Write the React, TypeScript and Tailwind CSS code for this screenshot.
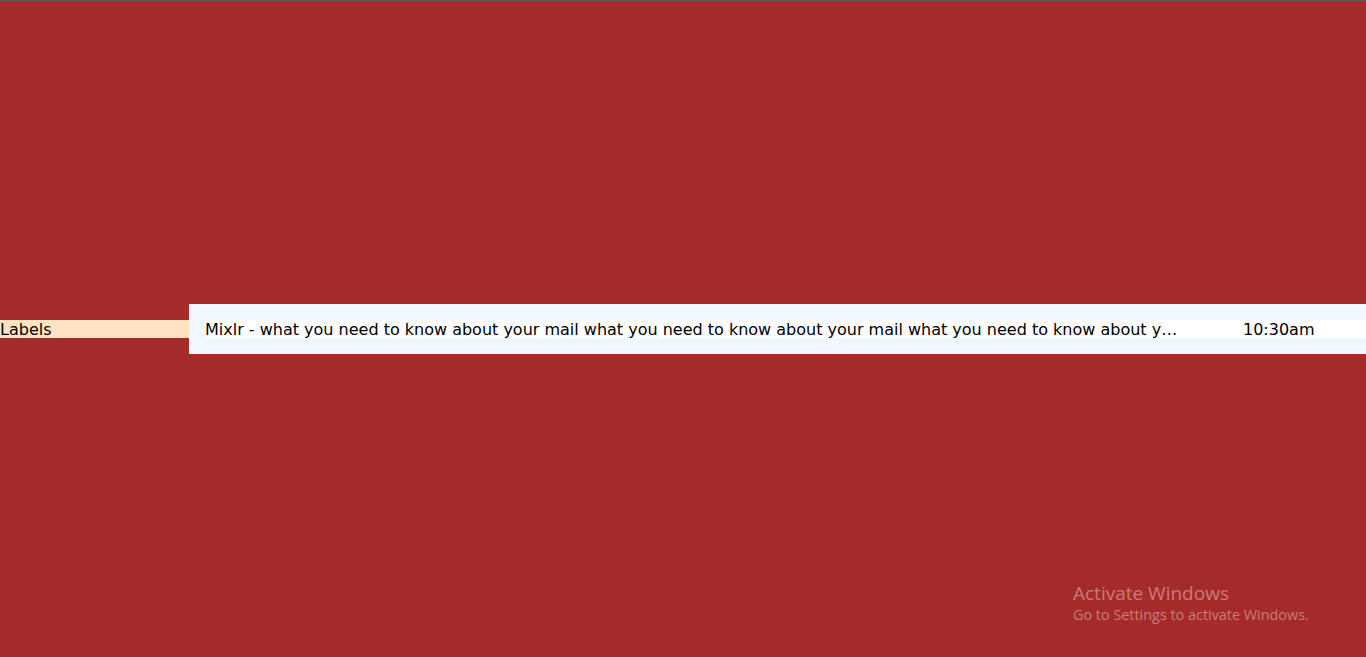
export default function App() {
  return (
    <div className="relative h-[657px] w-full overflow-hidden border-t border-[#5c5c5c] bg-[#a52a2a] font-['DejaVu_Sans',Verdana,sans-serif] text-[16px] text-black">
      <div className="flex h-full items-center">
        <div className="w-[189px] shrink-0 bg-[#ffe4c4] pt-[1px] leading-[17px]">Labels</div>
        <div className="flex-1 bg-[#f0f8ff] py-4 pl-4">
          <div className="flex items-center bg-white pt-[1px] leading-[17px]">
            <span className="w-[980px] truncate">
              Mixlr - what you need to know about your mail what you need to know about your mail what you need to know about your mail
            </span>
            <span className="ml-[58px]">10:30am</span>
          </div>
        </div>
      </div>
      <div className="absolute left-[1073px] top-[580px] font-['Open_Sans','Noto_Sans',sans-serif] text-[#c77d7b]">
        <div className="text-[19px] leading-[24px]">Activate Windows</div>
        <div className="text-[14.4px] leading-[20px]">Go to Settings to activate Windows.</div>
      </div>
    </div>
  )
}
